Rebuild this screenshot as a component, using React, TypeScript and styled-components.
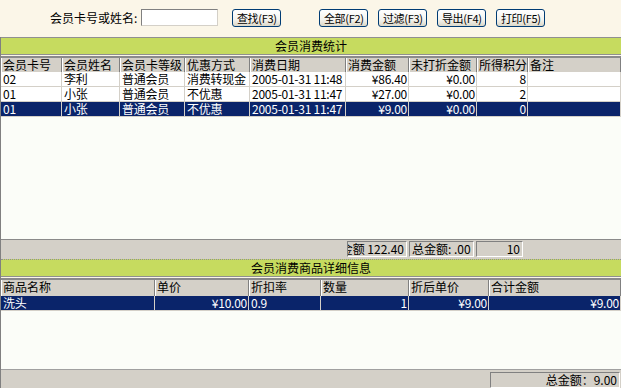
import styled, { createGlobalStyle } from 'styled-components'

const GlobalStyle = createGlobalStyle`
  html, body {
    margin: 0;
    padding: 0;
  }
  body {
    background: #fbf6e8;
    font-family: "Noto Sans CJK SC", sans-serif;
    font-size: 12px;
    color: #000;
  }
`

type Column = {
  title: string
  width: string
  align?: 'left' | 'right'
}

const memberColumns: Column[] = [
  { title: '会员卡号', width: '61px' },
  { title: '会员姓名', width: '58px' },
  { title: '会员卡等级', width: '65px' },
  { title: '优惠方式', width: '65px' },
  { title: '消费日期', width: '96px' },
  { title: '消费金额', width: '63px', align: 'right' },
  { title: '未打折金额', width: '68px', align: 'right' },
  { title: '所得积分', width: '51px', align: 'right' },
  { title: '备注', width: '1fr' },
]

const memberRows = [
  ['02', '李利', '普通会员', '消费转现金', '2005-01-31 11:48', '¥86.40', '¥0.00', '8', ''],
  ['01', '小张', '普通会员', '不优惠', '2005-01-31 11:47', '¥27.00', '¥0.00', '2', ''],
  ['01', '小张', '普通会员', '不优惠', '2005-01-31 11:47', '¥9.00', '¥0.00', '0', ''],
]

const goodsColumns: Column[] = [
  { title: '商品名称', width: '154px' },
  { title: '单价', width: '94px', align: 'right' },
  { title: '折扣率', width: '72px' },
  { title: '数量', width: '88px', align: 'right' },
  { title: '折后单价', width: '80px', align: 'right' },
  { title: '合计金额', width: '1fr', align: 'right' },
]

const goodsRows = [['洗头', '¥10.00', '0.9', '1', '¥9.00', '¥9.00']]

const template = (cols: Column[]) => cols.map((c) => c.width).join(' ')

export default function App() {
  return (
    <Page>
      <GlobalStyle />
      <Toolbar>
        <SearchLabel>会员卡号或姓名:</SearchLabel>
        <SearchInput />
        <ToolButton>查找(F3)</ToolButton>
        <ButtonGroup>
          <ToolButton>全部(F2)</ToolButton>
          <ToolButton>过滤(F3)</ToolButton>
          <ToolButton>导出(F4)</ToolButton>
          <ToolButton>打印(F5)</ToolButton>
        </ButtonGroup>
      </Toolbar>

      <Body>
        <Title>会员消费统计</Title>
        <Grid $height="183px">
          <HeaderRow $cols={template(memberColumns)} $height="14px">
            {memberColumns.map((c) => (
              <HeaderCell key={c.title}>{c.title}</HeaderCell>
            ))}
          </HeaderRow>
          {memberRows.map((row, i) => (
            <DataRow key={i} $cols={template(memberColumns)} $selected={i === memberRows.length - 1}>
              {row.map((v, j) => (
                <DataCell key={j} $align={memberColumns[j].align}>
                  {v}
                </DataCell>
              ))}
            </DataRow>
          ))}
        </Grid>

        <SummaryBar>
          <SunkenBox $width="60px" $align="right">金额 122.40</SunkenBox>
          <SunkenBox $width="65px">总金额: .00</SunkenBox>
          <SunkenBox $width="47px" $align="right">10</SunkenBox>
        </SummaryBar>

        <Title $dotted>会员消费商品详细信息</Title>
        <Grid $height="91px">
          <HeaderRow $cols={template(goodsColumns)} $height="16px">
            {goodsColumns.map((c) => (
              <HeaderCell key={c.title}>{c.title}</HeaderCell>
            ))}
          </HeaderRow>
          {goodsRows.map((row, i) => (
            <DataRow key={i} $cols={template(goodsColumns)} $selected>
              {row.map((v, j) => (
                <DataCell key={j} $align={goodsColumns[j].align}>
                  {v}
                </DataCell>
              ))}
            </DataRow>
          ))}
        </Grid>

        <StatusBar>
          <SunkenBox $width="130px" $align="right">总金额：9.00</SunkenBox>
        </StatusBar>
      </Body>
    </Page>
  )
}

const Page = styled.div`
  width: 621px;
  height: 388px;
  display: flex;
  flex-direction: column;
  overflow: hidden;
`

const Toolbar = styled.div`
  height: 37px;
  display: flex;
  align-items: flex-start;
  padding: 9px 0 0 50px;
  box-sizing: border-box;
`

const SearchLabel = styled.span`
  line-height: 17px;
  margin-right: 4px;
`

const SearchInput = styled.input`
  width: 77px;
  height: 17px;
  box-sizing: border-box;
  border: 1px solid;
  border-color: #808080 #d4d0c8 #d4d0c8 #808080;
  background: #fff;
  margin: 0 14px 0 0;
  padding: 0;
`

const ButtonGroup = styled.div`
  display: flex;
  gap: 10px;
  margin-left: 38px;
`

const ToolButton = styled.button`
  width: 49px;
  height: 18px;
  box-sizing: border-box;
  padding: 0;
  border: 1px solid #003c74;
  border-radius: 3px;
  background: linear-gradient(#ffffff, #f4f3ee 60%, #dcd8c8);
  font-family: "Noto Sans CJK SC", sans-serif;
  font-size: 11px;
  line-height: 15px;
  color: #000;
  white-space: nowrap;
  letter-spacing: -0.3px;
`

const Body = styled.div`
  flex: 1;
  display: flex;
  flex-direction: column;
  border-left: 1px solid #808080;
`

const Title = styled.div<{ $dotted?: boolean }>`
  height: 18px;
  box-sizing: border-box;
  background: #c6db5f;
  border-top: 1px ${({ $dotted }) => ($dotted ? 'dotted #909090' : 'solid #909090')};
  border-bottom: 1px solid #909090;
  margin-bottom: 1px;
  text-align: center;
  line-height: 16px;
`

const Grid = styled.div<{ $height: string }>`
  height: ${({ $height }) => $height};
  box-sizing: border-box;
  border-top: 2px solid #8a8a8a;
  background: #fbfdf8;
  overflow: hidden;
`

const HeaderRow = styled.div<{ $cols: string; $height: string }>`
  display: grid;
  grid-template-columns: ${({ $cols }) => $cols};
  height: ${({ $height }) => $height};
  background: #d4d0c8;
`

const HeaderCell = styled.div`
  padding-left: 2px;
  border-right: 1px solid #808080;
  box-shadow: inset 1px 0 #ffffff;
  line-height: 14px;
  white-space: nowrap;
  overflow-x: clip;
`

const DataRow = styled.div<{ $cols: string; $selected?: boolean }>`
  display: grid;
  grid-template-columns: ${({ $cols }) => $cols};
  height: 15px;
  background: ${({ $selected }) => ($selected ? '#0a246a' : '#ffffff')};
  color: ${({ $selected }) => ($selected ? '#ffffff' : '#000000')};
`

const DataCell = styled.div<{ $align?: 'left' | 'right' }>`
  padding: 0 1px 0 2px;
  text-align: ${({ $align }) => $align || 'left'};
  border-right: 1px solid #d4d0c8;
  border-bottom: 1px solid #d4d0c8;
  line-height: 14px;
  letter-spacing: -0.25px;
  white-space: nowrap;
  overflow-x: clip;
`

const SummaryBar = styled.div`
  height: 20px;
  box-sizing: border-box;
  border-top: 1px solid #8a8a8a;
  background: #d4d0c8;
  display: flex;
  gap: 2px;
  padding: 1px 0 0 346px;
`

const SunkenBox = styled.div<{ $width: string; $align?: 'left' | 'right' }>`
  width: ${({ $width }) => $width};
  height: 16px;
  box-sizing: border-box;
  border: 1px solid;
  border-color: #808080 #ffffff #ffffff #808080;
  display: flex;
  justify-content: ${({ $align }) => ($align === 'right' ? 'flex-end' : 'flex-start')};
  padding: 0 2px;
  line-height: 14px;
  white-space: nowrap;
  overflow-x: clip;
`

const StatusBar = styled.div`
  flex: 1;
  box-sizing: border-box;
  border-top: 1px solid #a0a0a0;
  background: #d4d0c8;
  display: flex;
  justify-content: flex-end;
  padding: 2px 1px 0 0;
`
